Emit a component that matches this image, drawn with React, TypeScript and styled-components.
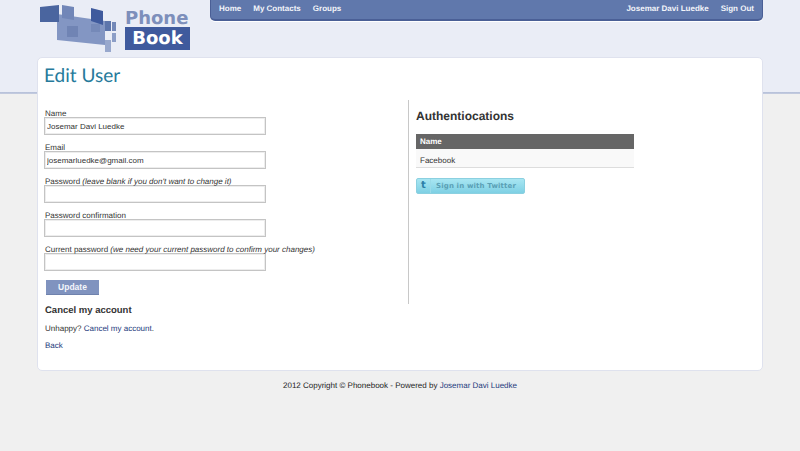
import React from 'react';
import styled, { createGlobalStyle } from 'styled-components';

const GlobalStyle = createGlobalStyle`
  html, body {
    margin: 0;
    padding: 0;
  }
  body {
    height: 451px;
    overflow: hidden;
    font-family: "Liberation Sans", Arial, sans-serif;
    font-size: 8px;
    color: #333;
    text-rendering: geometricPrecision;
    background: linear-gradient(#eaedf6 0, #eaedf6 92px, #b4bfd9 92px, #c6cde0 94px, #f0f0f0 94px);
  }
`;

const Page = styled.div`
  width: 726px;
  margin: 0 auto;
`;

const Header = styled.header`
  display: flex;
  height: 57px;
`;

const Logo = styled.div`
  display: flex;
  width: 173px;
  flex: none;
  padding: 4px 0 0 2px;
  box-sizing: border-box;
  gap: 8px;
`;

const LogoWords = styled.div`
  display: flex;
  flex-direction: column;
  width: 65px;
  margin-top: 6px;
  font-family: "DejaVu Sans", sans-serif;
  font-weight: bold;
  font-size: 18px;
  line-height: 23px;
`;

const LogoPhone = styled.span`
  color: #7d8fbb;
  height: 17px;
  line-height: 17px;
  white-space: nowrap;
`;

const LogoBook = styled.span`
  color: #fff;
  background: #3f5a9d;
  height: 23px;
  text-align: center;
`;

const Nav = styled.nav`
  flex: 1;
  height: 21px;
  display: flex;
  justify-content: space-between;
  align-items: center;
  padding: 0 8px 3px 8px;
  box-sizing: border-box;
  background: #6078ac;
  border: 1px solid #4a5f96;
  border-top: 0;
  border-bottom-width: 2px;
  border-radius: 0 0 5px 5px;
  box-shadow: 0 1px 0 #fff;
`;

const NavGroup = styled.div`
  display: flex;
  gap: 12px;
`;

const NavLink = styled.a`
  color: #f3f5fa;
  font-size: 8px;
  font-weight: bold;
`;

const Card = styled.main`
  height: 314px;
  background: #fff;
  border: 1px solid #dfe2ee;
  border-radius: 5px;
  padding: 5px 6px 0;
  box-sizing: border-box;
`;

const Title = styled.h1`
  margin: 0;
  height: 37px;
  font-family: Lato, sans-serif;
  font-weight: normal;
  font-size: 19px;
  line-height: 26px;
  color: #267a9b;
`;

const Columns = styled.div`
  display: flex;
`;

const FormColumn = styled.section`
  width: 364px;
  height: 204px;
  border-right: 1px solid #c8c8c8;
  flex: none;
`;

const SideColumn = styled.section`
  padding: 9px 0 0 7px;
  width: 218px;
`;

const Field = styled.div`
  height: 34px;
  padding-top: 9px;
  box-sizing: border-box;
`;

const Label = styled.label`
  display: block;
  height: 8px;
  line-height: 10px;
  padding-left: 1px;
  white-space: nowrap;
  color: #333;
`;

const Hint = styled.em`
  font-style: italic;
`;

const Input = styled.input`
  display: block;
  width: 222px;
  height: 18px;
  box-sizing: border-box;
  margin: 0;
  padding: 0 2px;
  border: 1px solid #c4c4c4;
  box-shadow: inset 0 0 0 1px #ededed;
  font-family: "Liberation Sans", Arial, sans-serif;
  font-size: 8px;
  color: #333;
  background: #fff;
  outline: none;
`;

const Submit = styled.button`
  display: block;
  width: 53px;
  height: 15px;
  margin: 10px 0 0 2px;
  padding: 0;
  border: 0;
  border-bottom: 1px solid #6f82ad;
  background: #8093bf;
  color: #f4f6fb;
  font-family: "Liberation Sans", Arial, sans-serif;
  font-size: 8.5px;
  font-weight: bold;
`;

const SubHeading = styled.h3`
  margin: 10px 0 0 1px;
  font-size: 9.5px;
  line-height: 12px;
  font-weight: bold;
  color: #333;
`;

const Text = styled.p`
  margin: 7px 0 0 1px;
  line-height: 10px;
  color: #333;
`;

const TextLink = styled.a`
  color: #1c3a7c;
`;

const SideHeading = styled.h2`
  margin: 0;
  font-size: 12px;
  line-height: 15px;
  font-weight: bold;
  color: #333;
`;

const Table = styled.table`
  width: 218px;
  margin-top: 10px;
  border-collapse: collapse;
`;

const Th = styled.th`
  height: 15px;
  padding: 0 4px;
  background: #666;
  color: #fff;
  font-size: 8px;
  font-weight: bold;
  text-align: left;
`;

const Td = styled.td`
  height: 18px;
  padding: 5px 4px 0;
  box-sizing: border-box;
  background: #f9f9f9;
  border-bottom: 1px solid #ddd;
  font-size: 8px;
  color: #333;
`;

const TwitterButton = styled.a`
  display: flex;
  align-items: center;
  width: 109px;
  height: 16px;
  margin-top: 10px;
  box-sizing: border-box;
  background: linear-gradient(#a8e6f2, #7ed0e4);
  border: 1px solid #8bd0e0;
  border-radius: 2px;
`;

const TwitterIcon = styled.span`
  width: 14px;
  flex: none;
  padding-left: 4px;
  color: #2b7fa8;
  font-weight: bold;
  font-size: 10px;
  font-family: "DejaVu Sans", sans-serif;
  line-height: 14px;
  border-right: 1px solid #9adbe9;
  box-sizing: border-box;
  margin-right: 5px;
  height: 14px;
`;

const TwitterLabel = styled.span`
  font-family: "DejaVu Sans", sans-serif;
  font-weight: bold;
  font-size: 7px;
  letter-spacing: 0.15px;
  color: #5aa0b5;
  white-space: nowrap;
`;

const Footer = styled.footer`
  margin-top: 10px;
  text-align: center;
  line-height: 10px;
  color: #222;
`;

const LogoMark = () => (
  <svg width="78" height="48" viewBox="0 0 78 48" aria-hidden="true">
    <polygon points="18,10 66,17 66,41 18,36" fill="#8396c3" />
    <polygon points="1,3 20,1 20,18 1,18" fill="#4a659f" />
    <polygon points="23,1 35,3 35,16 23,14" fill="#7186b8" />
    <polygon points="52,4 64,7 64,21 52,17" fill="#3f5a9d" />
    <rect x="28" y="22" width="11" height="11" fill="#7084b4" />
    <rect x="52" y="20" width="9" height="8" fill="#7589b8" />
    <rect x="66" y="17" width="6" height="10" fill="#5d75ab" />
    <rect x="73" y="18" width="4" height="9" fill="#7388b8" />
    <rect x="73" y="29" width="4" height="9" fill="#8c9ec7" />
    <polygon points="66,36 72,36 72,48 66,48" fill="#98a8cd" />
  </svg>
);

export default function App() {
  return (
    <Page>
      <GlobalStyle />
      <Header>
        <Logo>
          <LogoMark />
          <LogoWords>
            <LogoPhone>Phone</LogoPhone>
            <LogoBook>Book</LogoBook>
          </LogoWords>
        </Logo>
        <Nav>
          <NavGroup>
            <NavLink>Home</NavLink>
            <NavLink>My Contacts</NavLink>
            <NavLink>Groups</NavLink>
          </NavGroup>
          <NavGroup>
            <NavLink>Josemar Davi Luedke</NavLink>
            <NavLink>Sign Out</NavLink>
          </NavGroup>
        </Nav>
      </Header>
      <Card>
        <Title>Edit User</Title>
        <Columns>
          <FormColumn>
            <Field>
              <Label>Name</Label>
              <Input defaultValue="Josemar Davi Luedke" />
            </Field>
            <Field>
              <Label>Email</Label>
              <Input defaultValue="josemarluedke@gmail.com" />
            </Field>
            <Field>
              <Label>
                Password <Hint>(leave blank if you don't want to change it)</Hint>
              </Label>
              <Input />
            </Field>
            <Field>
              <Label>Password confirmation</Label>
              <Input />
            </Field>
            <Field>
              <Label>
                Current password <Hint>(we need your current password to confirm your changes)</Hint>
              </Label>
              <Input />
            </Field>
            <Submit>Update</Submit>
            <SubHeading>Cancel my account</SubHeading>
            <Text>
              Unhappy? <TextLink>Cancel my account</TextLink>.
            </Text>
            <Text>
              <TextLink>Back</TextLink>
            </Text>
          </FormColumn>
          <SideColumn>
            <SideHeading>Authentiocations</SideHeading>
            <Table>
              <thead>
                <tr>
                  <Th>Name</Th>
                </tr>
              </thead>
              <tbody>
                <tr>
                  <Td>Facebook</Td>
                </tr>
              </tbody>
            </Table>
            <TwitterButton>
              <TwitterIcon>t</TwitterIcon>
              <TwitterLabel>Sign in with Twitter</TwitterLabel>
            </TwitterButton>
          </SideColumn>
        </Columns>
      </Card>
      <Footer>
        2012 Copyright © Phonebook - Powered by <TextLink>Josemar Davi Luedke</TextLink>
      </Footer>
    </Page>
  );
}
